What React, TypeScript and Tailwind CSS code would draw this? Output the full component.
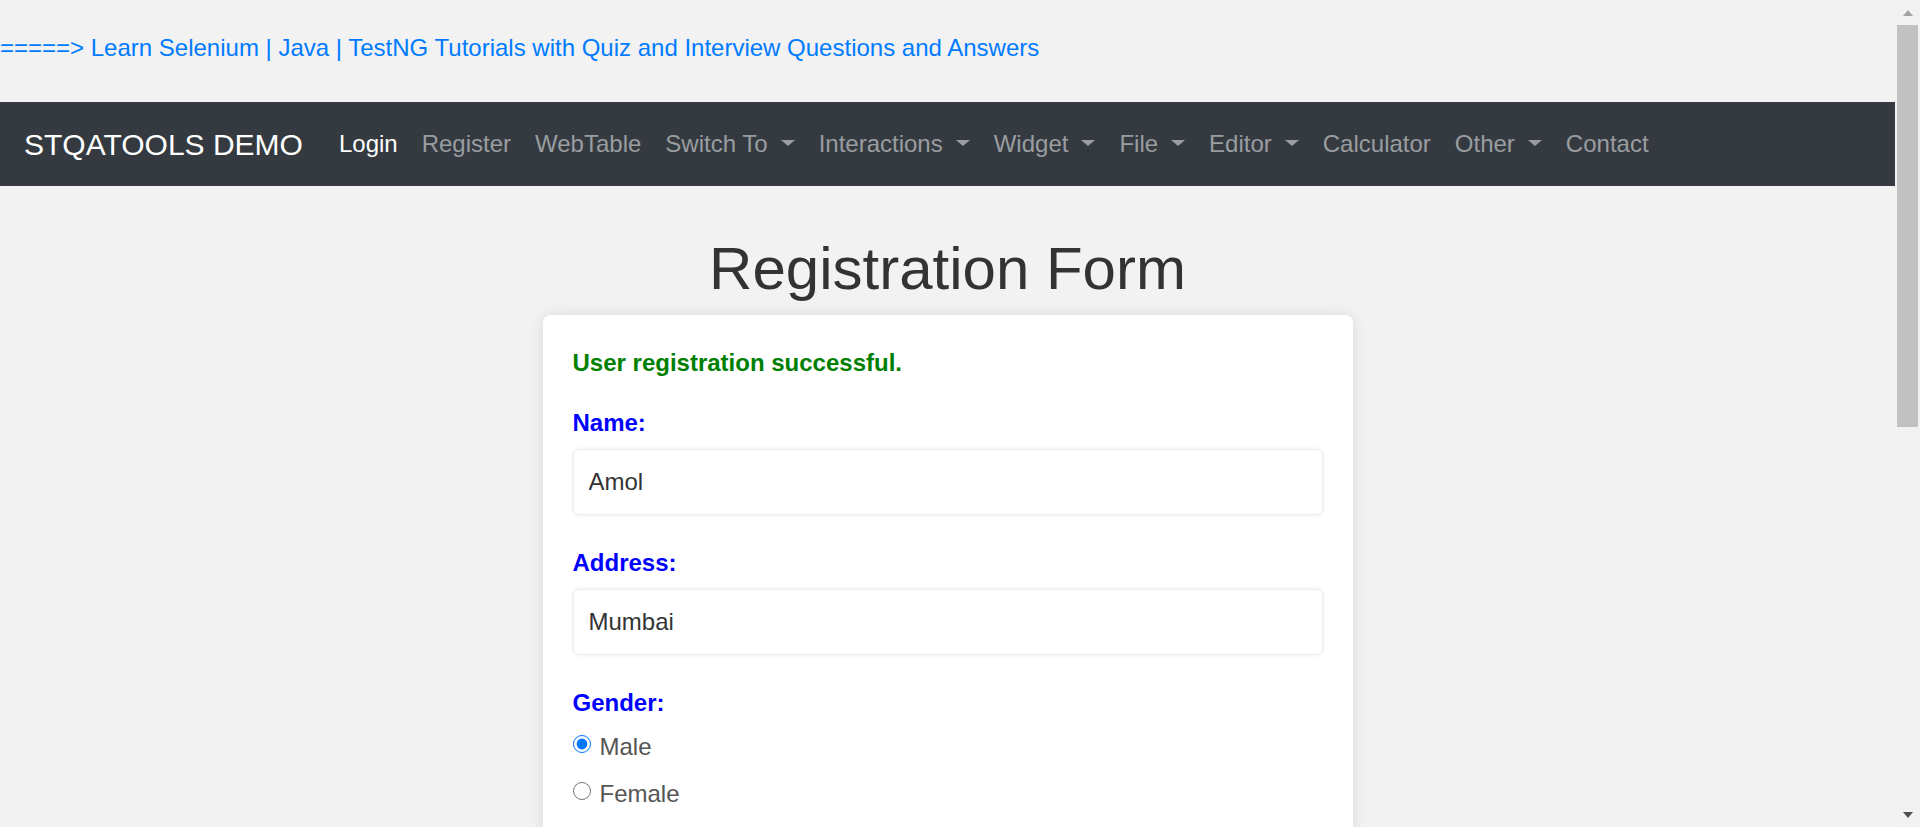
import { useState } from "react";

type NavItem = { label: string; dropdown?: boolean; active?: boolean };

const navItems: NavItem[] = [
  { label: "Login", active: true },
  { label: "Register" },
  { label: "WebTable" },
  { label: "Switch To", dropdown: true },
  { label: "Interactions", dropdown: true },
  { label: "Widget", dropdown: true },
  { label: "File", dropdown: true },
  { label: "Editor", dropdown: true },
  { label: "Calculator" },
  { label: "Other", dropdown: true },
  { label: "Contact" },
];

export default function App() {
  const [gender, setGender] = useState("male");

  return (
    <div className="flex h-screen bg-[#f2f2f2] font-['Liberation_Sans',Arial,sans-serif] text-[#333]">
      <main className="h-screen min-w-0 flex-1 overflow-y-auto [scrollbar-width:none]">
        <div className="pt-[30px] pb-[36px] text-[24px] leading-[36px]">
          <a href="#" className="text-[#007bff]">
            =====&gt; Learn Selenium | Java | TestNG Tutorials with Quiz and Interview Questions and Answers
          </a>
        </div>

        <nav className="flex h-[84px] items-center bg-[#343a40] px-[24px]">
          <a href="#" className="mr-[24px] text-[30px] leading-[45px] text-white">
            STQATOOLS DEMO
          </a>
          <ul className="flex items-center">
            {navItems.map((item) => (
              <li key={item.label}>
                <a
                  href="#"
                  className={
                    "flex items-center px-[12px] text-[24px] leading-[36px] " +
                    (item.active ? "text-white" : "text-[#9a9da0]")
                  }
                >
                  {item.label}
                  {item.dropdown && (
                    <span className="mb-[3px] ml-[13px] inline-block border-x-[7px] border-t-[6px] border-x-transparent border-t-[#9a9da0]" />
                  )}
                </a>
              </li>
            ))}
          </ul>
        </nav>

        <h1 className="mt-[47px] mb-[10px] text-center text-[60px] leading-[72px] text-[#333]">Registration Form</h1>

        {/* card runs on below the fold */}
        <div className="mx-auto mb-[60px] w-[810px] rounded-[8px] bg-white p-[30px] pb-[200px] shadow-[0_0_15px_rgba(0,0,0,0.1)]">
          <p className="mb-[24px] text-[24px] font-bold leading-[36px] text-[#008000]">User registration successful.</p>

          <Field label="Name:" value="Amol" />
          <Field label="Address:" value="Mumbai" />

          <Label>Gender:</Label>
          <Radio label="Male" checked={gender === "male"} onChange={() => setGender("male")} />
          <Radio label="Female" checked={gender === "female"} onChange={() => setGender("female")} />
        </div>
      </main>

      {/* page scrollbar */}
      <aside className="flex h-screen w-[25px] shrink-0 flex-col bg-[#f1f1f1]">
        <div className="flex h-[25px] items-center justify-center">
          <span className="inline-block border-x-[5.5px] border-b-[6px] border-x-transparent border-b-[#a3a3a3]" />
        </div>
        <div className="mx-[2px] h-[402px] bg-[#c1c1c1]" />
        <div className="flex-1" />
        <div className="flex h-[25px] items-center justify-center">
          <span className="inline-block border-x-[5.5px] border-t-[6px] border-x-transparent border-t-[#505050]" />
        </div>
      </aside>
    </div>
  );
}

function Label({ children }: { children: React.ReactNode }) {
  return <label className="mb-[8px] block text-[24px] font-bold leading-[36px] text-[#0000ff]">{children}</label>;
}

function Field({ label, value }: { label: string; value: string }) {
  return (
    <div>
      <Label>{label}</Label>
      <input
        type="text"
        defaultValue={value}
        className="mb-[30px] block h-[66px] w-full rounded-[6px] border border-[#eee] bg-white px-[15px] text-[24px] text-[#333] shadow-[0_0_4px_rgba(0,0,0,0.08)] outline-none"
      />
    </div>
  );
}

function Radio({ label, checked, onChange }: { label: string; checked: boolean; onChange: () => void }) {
  return (
    <label className="mb-[11px] flex h-[36px] items-start text-[24px] leading-[36px] text-[#555]">
      <input
        type="radio"
        name="gender"
        checked={checked}
        onChange={onChange}
        className="m-0 mt-[6px] mr-[9px] h-[18px] w-[18px]"
      />
      {label}
    </label>
  );
}
